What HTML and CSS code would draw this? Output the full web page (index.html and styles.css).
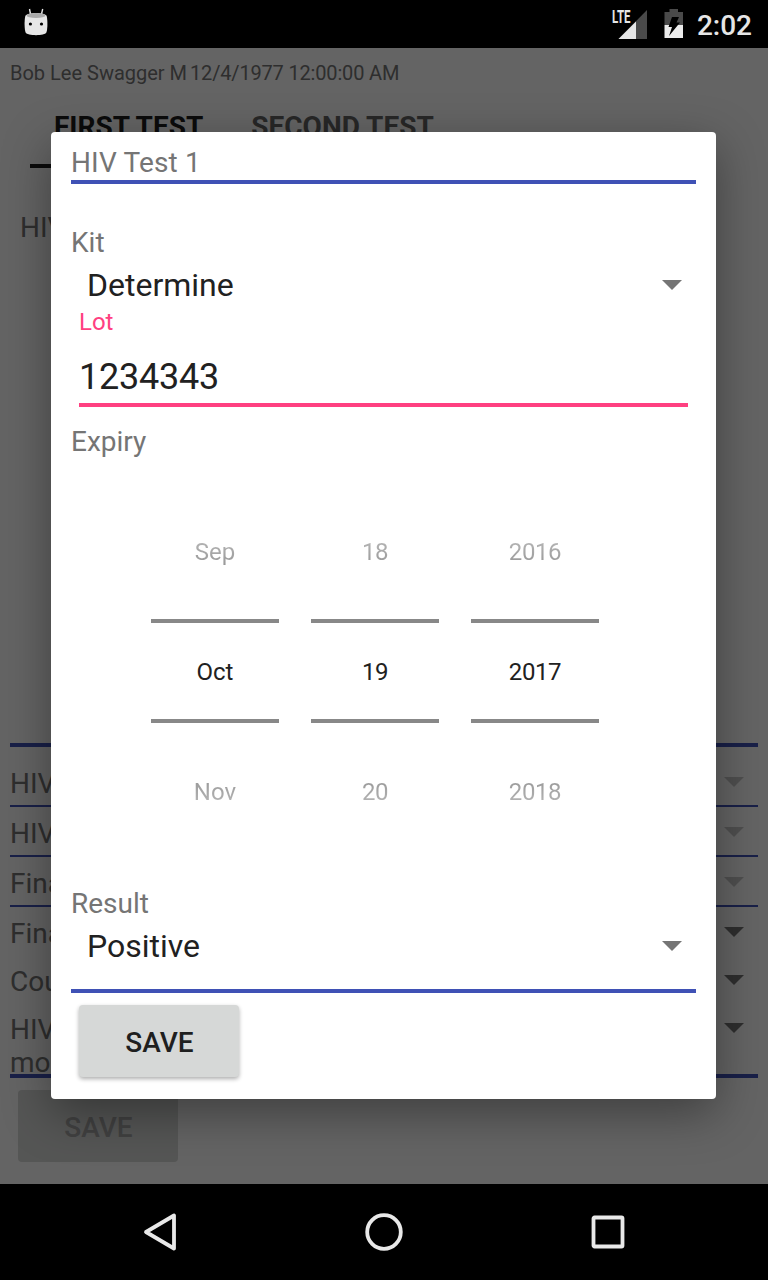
FILE: index.html
```
<!DOCTYPE html>
<html lang="en">
<head>
<meta charset="utf-8">
<title>HIV Test 1</title>
<link rel="stylesheet" href="styles.css">
</head>
<body>
<div class="screen">
  <header class="status">
    <svg class="droid" width="24" height="28" viewBox="0 0 24 28">
      <path d="M6.500 6L5.500 1M17.500 6L18.700 1" stroke="#e4e4e4" stroke-width="1.4" fill="none"/>
      <path d="M1.3 8C3 4 21 4 22.7 8C23.8 13 23.6 21 22.4 24.500C21 28 3 28 1.6 24.500C.4 21 .2 13 1.3 8Z" fill="#e6e6e6"/>
      <ellipse cx="12" cy="7.500" rx="9.500" ry="2.600" fill="#aaa"/>
      <circle cx="6.400" cy="16" r="1.600" fill="#000"/><circle cx="17.500" cy="16" r="1.600" fill="#000"/>
    </svg>
    <div class="indicators">
      <svg class="signal" width="38" height="38" viewBox="-2 -6 38 38">
        <path d="M35 2V31H6.500Z" fill="#4a4a4a"/>
        <path d="M24 13.500V31H6.500Z" fill="#e6e6e6"/>
        <path d="M0 2H18V16H0Z" fill="#000"/>
        <text class="lte" x="0" y="15" textLength="18.500" lengthAdjust="spacingAndGlyphs">LTE</text>
      </svg>
      <svg class="battery" width="20" height="30" viewBox="0 0 20 30">
        <path d="M.5 3H5.500V0H14V3H19V16H.5Z" fill="#4a4a4a"/>
        <path d="M.5 16H19V29H.5Z" fill="#ececec"/>
        <path d="M8 8H15L12.500 13.500H16L5 27L8 18H4.500Z" fill="#000"/>
      </svg>
      <span class="clock">2:02</span>
    </div>
  </header>
  <main class="app">
    <div class="patient">Bob Lee Swagger M <span class="birth">12/4/1977 12:00:00 AM</span></div>
    <div class="tabs"><div class="tab active">FIRST TEST</div><div class="tab">SECOND TEST</div></div>
    <div class="pane">HIV</div>
    <div class="rows">
      <div class="row lined off"><span>HIV</span><i class="arrow"></i></div>
      <div class="row lined off"><span>HIV</span><i class="arrow"></i></div>
      <div class="row lined off"><span>Final</span><i class="arrow"></i></div>
      <div class="row"><span>Final</span><i class="arrow"></i></div>
      <div class="row"><span>Cou</span><i class="arrow"></i></div>
      <div class="row tall"><span>HIV<br>mo</span><i class="arrow"></i></div>
    </div>
    <div class="button disabled">SAVE</div>
  </main>
  <nav class="nav">
    <svg width="40" height="40" viewBox="0 0 40 40"><path d="M34 3.500V36.500L6 20Z"/></svg>
    <svg width="40" height="40" viewBox="0 0 40 40"><circle cx="20" cy="20" r="16.800"/></svg>
    <svg width="40" height="40" viewBox="0 0 40 40"><rect x="5.500" y="5.500" width="29" height="29" rx="1"/></svg>
  </nav>
  <div class="scrim">
    <section class="dialog">
      <h1 class="label title">HIV Test 1</h1>
      <div class="label kit">Kit</div>
      <div class="select"><span>Determine</span><i class="arrow"></i></div>
      <div class="field"><div class="hint">Lot</div><div class="value">1234343</div></div>
      <div class="label">Expiry</div>
      <div class="picker">
        <div class="wheel"><div class="prev">Sep</div><div class="now">Oct</div><div class="next">Nov</div></div>
        <div class="wheel num"><div class="prev">18</div><div class="now">19</div><div class="next">20</div></div>
        <div class="wheel num"><div class="prev">2016</div><div class="now">2017</div><div class="next">2018</div></div>
      </div>
      <div class="label result">Result</div>
      <div class="select last"><span>Positive</span><i class="arrow"></i></div>
      <div class="button">SAVE</div>
    </section>
  </div>
</div>
</body>
</html>
```
FILE: styles.css
```
* { box-sizing: border-box; }
body { margin: 0; font-family: Roboto, sans-serif; background: #000; }
.screen { position: relative; width: 768px; height: 1280px; overflow: hidden; display: flex; flex-direction: column; }

.status { height: 48px; background: #000; display: flex; justify-content: space-between; padding: 0 16px 0 24px; }
.droid { margin-top: 8px; }
.indicators { display: flex; }
.signal { margin-top: 2px; }
.battery { margin: 9px 0 0 16px; }
.lte { font: 700 18px Roboto, sans-serif; fill: #e6e6e6; }
.clock { margin-left: 13px; color: #e6e6e6; font-size: 28px; font-weight: 500; line-height: 51px; }

.app { height: 1136px; background: #fafafa; padding: 12px 10px 0; color: #737373; }
.patient { font-size: 20px; line-height: 26px; height: 26px; white-space: nowrap; }
.birth { margin-left: -2px; letter-spacing: -.17px; }
.tabs { display: flex; height: 82px; padding-left: 20px; font-size: 28px; font-weight: 700; line-height: 34px; color: #636363; }
.tab { padding: 24px 24px 0; white-space: nowrap; }
.tab.active { color: #1c1c1c; border-bottom: 4px solid #1c1c1c; }
.pane { height: 579px; padding: 43px 10px 0; border-bottom: 4px solid #3f51b5; font-size: 28px; line-height: 33px; }
.rows { height: 331px; border-bottom: 4px solid #3f51b5; padding-top: 10px; }
.row { height: 48px; display: flex; justify-content: space-between; padding: 10px 14px 0 0; font-size: 28px; line-height: 33px; }
.row.lined { height: 50px; border-bottom: 2px solid #3f51b5; }
.row.tall { height: 80px; }
.arrow { flex: none; width: 20px; height: 10px; background: #737373; clip-path: polygon(0 0, 100% 0, 50% 100%); margin-top: 10px; }
.off .arrow { background: #c6c6c6; }

.button { width: 160px; height: 72px; margin-left: 8px; border-radius: 4px; background: #d6d8d7; color: #1f1f1f; font-size: 28px; font-weight: 500; line-height: 75px; text-align: center; text-indent: 1px; box-shadow: 0 2px 4px rgba(0, 0, 0, .32); }
.button.disabled { margin-top: 12px; background: #d5d6d5; color: #a2a2a2; box-shadow: none; }

.nav { height: 96px; background: #000; display: flex; justify-content: center; align-items: center; gap: 184px; }
.nav svg { fill: none; stroke: #e9e9e9; stroke-width: 3.8; stroke-linejoin: round; }

.scrim { position: absolute; top: 48px; left: 0; width: 768px; height: 1136px; padding: 84px 0 0 51px; background: rgba(0, 0, 0, .6); overflow: hidden; }
.dialog { width: 665px; height: 967px; padding: 14px 20px 0; border-radius: 4px; background: #fff; box-shadow: 0 14px 48px rgba(0, 0, 0, .38); }
.label { margin: 0; color: #757575; font-size: 28px; font-weight: 400; line-height: 33px; }
.title { height: 38px; border-bottom: 4px solid #3f51b5; letter-spacing: .15px; }
.kit { margin-top: 42px; }
.select { height: 49px; display: flex; justify-content: space-between; padding: 7px 14px 0 16px; color: #212121; font-size: 32px; line-height: 38px; }
.select .arrow { margin-top: 14px; background: #757575; }
.field { height: 99px; margin: 0 8px 18px; border-bottom: 4px solid #ff4081; }
.hint { color: #ff4081; font-size: 24px; line-height: 28px; }
.value { margin-top: 20px; color: #212121; font-size: 36px; line-height: 42px; letter-spacing: -.25px; }
.picker { display: flex; gap: 32px; height: 360px; margin: 34px 0 0 80px; }
.wheel { width: 128px; text-align: center; font-size: 24px; line-height: 28px; }
.num { letter-spacing: -.4px; }
.prev { height: 127px; padding-top: 46px; background: linear-gradient(#b8b8b8 46px, #979797 74px); background-clip: text; color: transparent; }
.now { height: 104px; padding-top: 35px; border: solid #888; border-width: 4px 0; color: #212121; }
.next { padding-top: 55px; background: linear-gradient(#979797 55px, #b8b8b8 83px); background-clip: text; color: transparent; }
.result { margin-top: 35px; }
.select.last { height: 73px; margin-bottom: 12px; border-bottom: 4px solid #3f51b5; }
```
